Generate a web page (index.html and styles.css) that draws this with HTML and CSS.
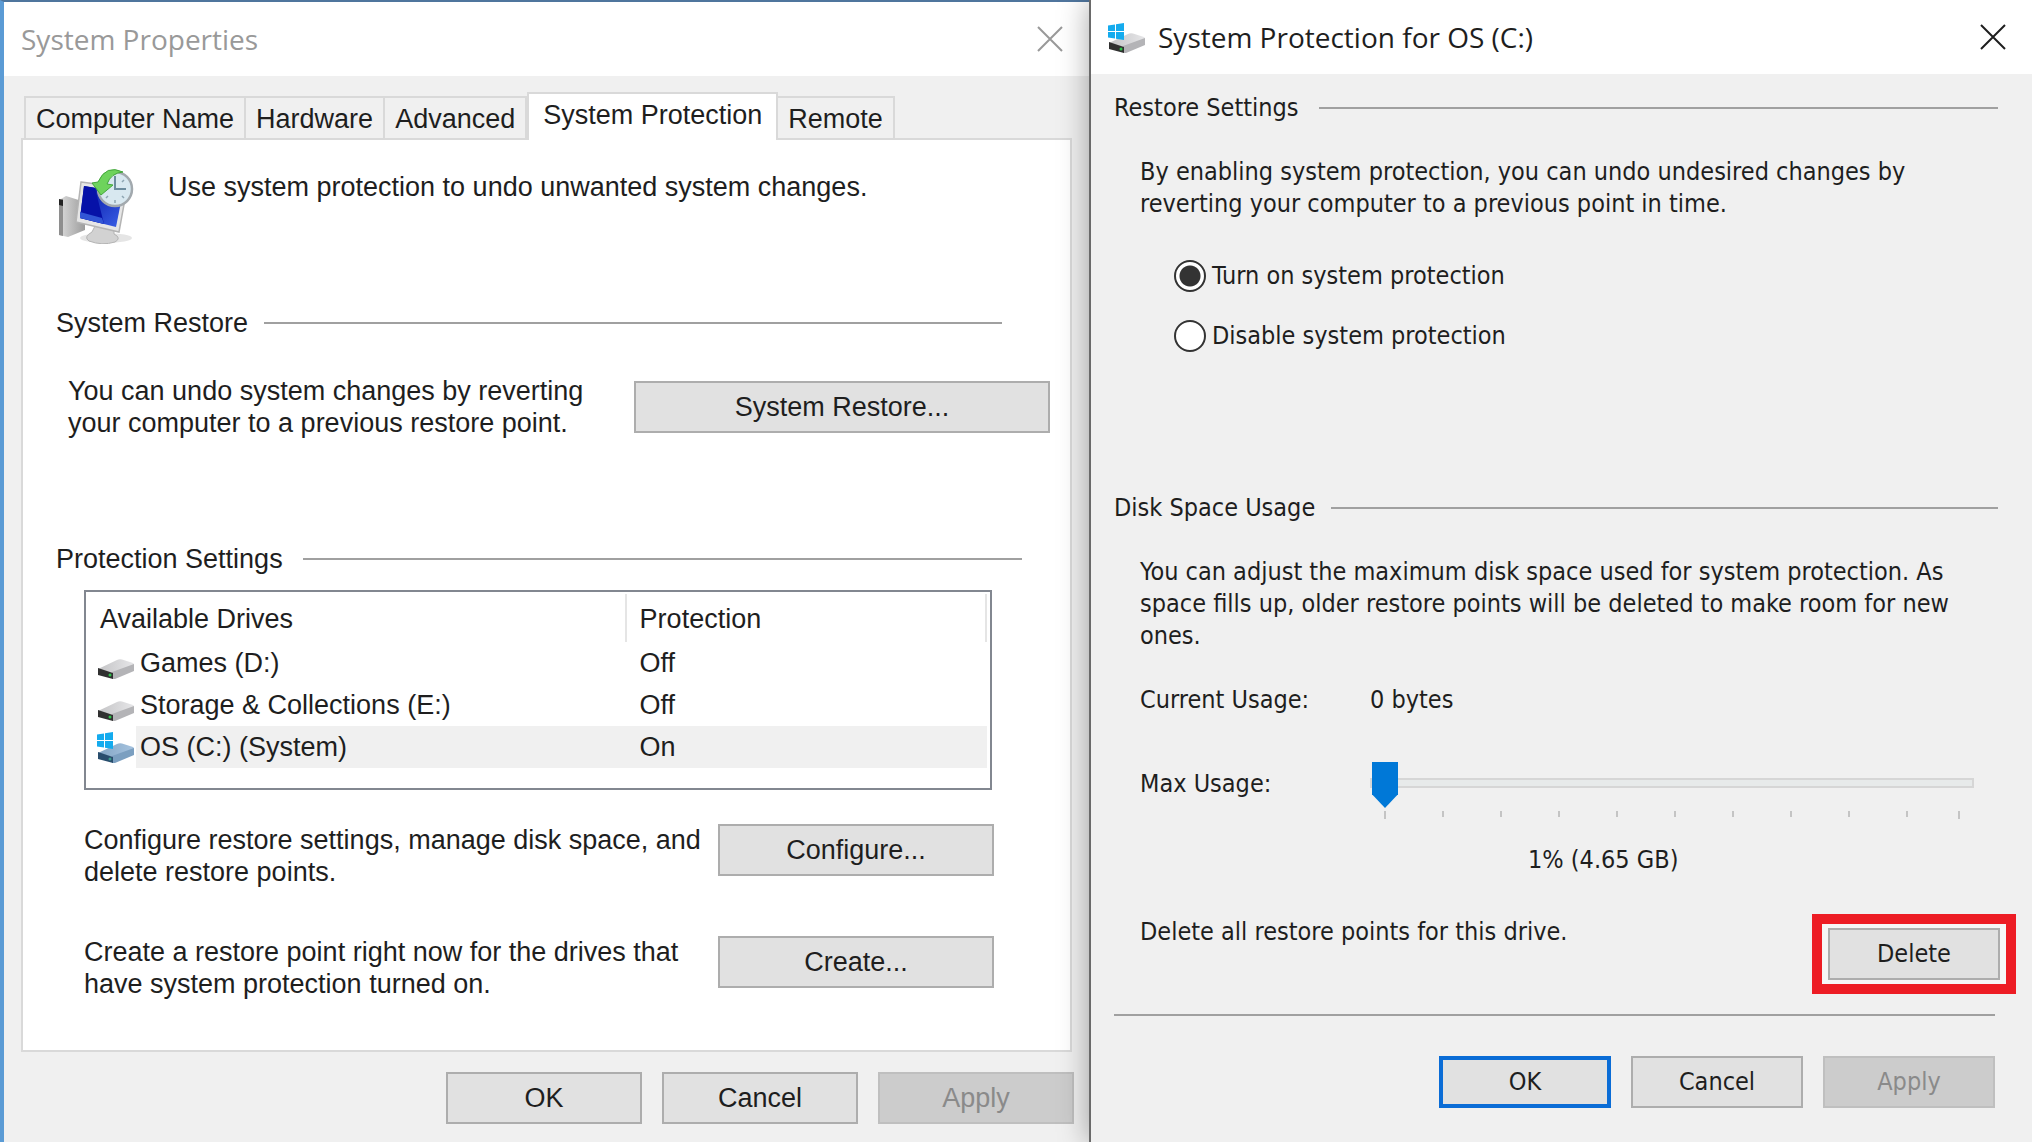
FILE: index.html
```html
<!DOCTYPE html>
<html lang="en">
<head>
    <meta charset="UTF-8">
    <meta name="viewport" content="width=device-width, initial-scale=1.0">
    <title>System Protection</title>
    <link rel="stylesheet" href="styles.css">
</head>
<body>
    <svg class="defs" width="0" height="0" aria-hidden="true">
        <defs>
            <linearGradient id="drive-top" x1="0" x2="1">
                <stop offset="0" stop-color="#c4c4c6"/>
                <stop offset="1" stop-color="#e6e6e8"/>
            </linearGradient>
            <linearGradient id="drive-top-blue" x1="0" x2="1">
                <stop offset="0" stop-color="#83a5c4"/>
                <stop offset="1" stop-color="#a6c3df"/>
            </linearGradient>
            <linearGradient id="metal" x1="0" x2="1">
                <stop offset="0" stop-color="#dcdcdc"/>
                <stop offset="1" stop-color="#9c9c9c"/>
            </linearGradient>
            <linearGradient id="screen" x1="0" x2="1" y1="0" y2="1">
                <stop offset="0" stop-color="#0010a0"/>
                <stop offset="1" stop-color="#3c62e8"/>
            </linearGradient>
            <symbol id="drive" viewBox="0 0 38 36">
                <path d="M1 24 L20 15 Q22 14 25 14.500 L36 18 Q37 18.500 37 20 L15 28 Z" fill="url(#drive-top)"/>
                <path d="M37 19 V26 L18 34 L15 34 V27 Z" fill="#b4b4b7"/>
                <path d="M1 23 L16 28 V34 L1 30 Z" fill="#303030"/>
                <circle cx="13" cy="30" r="1.500" fill="#2fc24a"/>
            </symbol>
            <symbol id="drive-blue" viewBox="0 0 38 36">
                <path d="M1 24 L20 15 Q22 14 25 14.500 L36 18 Q37 18.500 37 20 L15 28 Z" fill="url(#drive-top-blue)"/>
                <path d="M37 19 V26 L18 34 L15 34 V27 Z" fill="#7b9fc0"/>
                <path d="M1 23 L16 28 V34 L1 30 Z" fill="#294d6d"/>
                <circle cx="13" cy="30" r="1.500" fill="#3c9c8c"/>
            </symbol>
            <symbol id="win-flag" viewBox="0 0 16 17">
                <path d="M0 2.500 L7 1.500 V8 H0 Z M8 1.300 L16 0 V8 H8 Z M0 9 H7 V15.500 L0 14.500 Z M8 9 H16 V17 L8 15.700 Z"/>
            </symbol>
        </defs>
    </svg>

    <div class="desktop">
        <section class="window window-back">
            <header class="titlebar">
                <h1>System Properties</h1>
                <button class="close" aria-label="Close">
                    <svg width="26" height="26" viewBox="0 0 26 26"><path d="M1 1 L25 25 M25 1 L1 25"/></svg>
                </button>
            </header>

            <div class="body">
                <nav class="tabs" role="tablist">
                    <button role="tab">Computer Name</button>
                    <button role="tab">Hardware</button>
                    <button role="tab">Advanced</button>
                    <button role="tab" class="active" aria-selected="true">System Protection</button>
                    <button role="tab">Remote</button>
                </nav>

                <div class="panel">
                    <div class="intro">
                        <svg width="76" height="76" viewBox="0 0 76 76" aria-hidden="true">
                            <ellipse cx="48" cy="70" rx="26" ry="5" fill="#000" opacity=".1"/>
                            <path d="M1 32 L8 28 L27 34 V62 L10 69 L1 67 Z" fill="url(#metal)"/>
                            <path d="M1 32 L5 31 V68 L1 67 Z" fill="#8e8e8e"/>
                            <path d="M1 31 L5 32 V38 L1 37 Z" fill="#222"/>
                            <path d="M38 56 L56 62 L56 66 Q64 70 57 74 Q44 78 31 73 Q25 69 34 64 Z" fill="#d2d2d2" stroke="#b4b4b4"/>
                            <path d="M23 14 L69 20 L61 64 L18 54 Z" fill="#e6e6e6" stroke="#b4b4b4" stroke-width="1.500"/>
                            <path d="M26 18 L65 24 L58 59 L22 50 Z" fill="url(#screen)"/>
                            <path d="M26 18 L37 20 L46 56 L22 50 Z" fill="#0611a8"/>
                            <path d="M22 44 L44 50 L46 56 L22 50 Z" fill="#3155d6"/>
                            <circle cx="57" cy="21" r="17" fill="#d8e8f0" stroke="#a2a9ae" stroke-width="2.500"/>
                            <path d="M57 8 V21 H68" fill="none" stroke="#6d8c9e" stroke-width="2"/>
                            <path d="M57 32 V35 M44 21 H47 M48 12 L50 14 M66 12 L64 14 M48 30 L50 28 M66 30 L64 28" stroke="#8da5b2" stroke-width="1.500"/>
                            <path d="M65 4 Q48 -4 40 14 L34 15 L43 27 L55 17 L49 16 Q53 5 65 4 Z" fill="#6ed35c" stroke="#43a63c"/>
                        </svg>
                        <p>Use system protection to undo unwanted system changes.</p>
                    </div>

                    <h2 class="rule rule-restore">System Restore</h2>
                    <div class="row row-restore">
                        <p>You can undo system changes by reverting<br>your computer to a previous restore point.</p>
                        <button class="btn btn-wide">System Restore...</button>
                    </div>

                    <h2 class="rule rule-settings">Protection Settings</h2>
                    <div class="drives">
                        <table>
                            <colgroup>
                                <col class="col-icon">
                                <col>
                                <col class="col-state">
                            </colgroup>
                            <thead>
                                <tr>
                                    <th colspan="2" scope="col">Available Drives</th>
                                    <th scope="col" class="state">Protection</th>
                                </tr>
                            </thead>
                            <tbody>
                                <tr>
                                    <td class="icon"><svg width="38" height="36"><use href="#drive"/></svg></td>
                                    <td>Games (D:)</td>
                                    <td class="state">Off</td>
                                </tr>
                                <tr>
                                    <td class="icon"><svg width="38" height="36"><use href="#drive"/></svg></td>
                                    <td>Storage &amp; Collections (E:)</td>
                                    <td class="state">Off</td>
                                </tr>
                                <tr class="selected">
                                    <td class="icon">
                                        <svg width="38" height="36"><use href="#drive-blue"/><use class="flag" href="#win-flag" y="3" width="16" height="17"/></svg>
                                    </td>
                                    <td>OS (C:) (System)</td>
                                    <td class="state">On</td>
                                </tr>
                            </tbody>
                        </table>
                    </div>

                    <div class="row row-configure">
                        <p>Configure restore settings, manage disk space, and<br>delete restore points.</p>
                        <button class="btn btn-mid">Configure...</button>
                    </div>
                    <div class="row row-create">
                        <p>Create a restore point right now for the drives that<br>have system protection turned on.</p>
                        <button class="btn btn-mid">Create...</button>
                    </div>
                </div>

                <footer class="actions">
                    <button class="btn">OK</button>
                    <button class="btn">Cancel</button>
                    <button class="btn" disabled>Apply</button>
                </footer>
            </div>
        </section>

        <section class="window window-front">
            <header class="titlebar">
                <svg width="38" height="36" aria-hidden="true"><use href="#drive"/><use class="flag" href="#win-flag" y="4" width="16" height="17"/></svg>
                <h1>System Protection for OS (C:)</h1>
                <button class="close" aria-label="Close">
                    <svg width="26" height="26" viewBox="0 0 26 26"><path d="M1 1 L25 25 M25 1 L1 25"/></svg>
                </button>
            </header>

            <form class="body">
                <h2 class="rule">Restore Settings</h2>
                <p class="text">By enabling system protection, you can undo undesired changes by<br>reverting your computer to a previous point in time.</p>
                <div class="radios">
                    <label><input type="radio" name="protection" checked>Turn on system protection</label>
                    <label><input type="radio" name="protection">Disable system protection</label>
                </div>

                <h2 class="rule rule-usage">Disk Space Usage</h2>
                <p class="text">You can adjust the maximum disk space used for system protection. As<br>space fills up, older restore points will be deleted to make room for new<br>ones.</p>
                <div class="usage">
                    <span>Current Usage:</span>
                    <span>0 bytes</span>
                </div>
                <div class="usage usage-max">
                    <label for="max-usage">Max Usage:</label>
                    <div class="slider">
                        <input type="range" id="max-usage" min="1" max="100" value="1">
                        <div class="ticks">
                            <i></i><i></i><i></i><i></i><i></i><i></i><i></i><i></i><i></i><i></i>
                        </div>
                        <output for="max-usage">1% (4.65 GB)</output>
                    </div>
                </div>

                <div class="delete">
                    <p>Delete all restore points for this drive.</p>
                    <div class="highlight">
                        <button type="button" class="btn">Delete</button>
                    </div>
                </div>

                <footer class="actions">
                    <button type="button" class="btn btn-default">OK</button>
                    <button type="button" class="btn">Cancel</button>
                    <button type="button" class="btn" disabled>Apply</button>
                </footer>
            </form>
        </section>
    </div>
</body>
</html>
```

FILE: styles.css
```css
* {
    box-sizing: border-box;
}

body {
    margin: 0;
    color: #1e1e1e;
    background-color: #f0f0f0;
}

h1, h2, p {
    margin: 0;
    font-weight: normal;
}

button {
    font: inherit;
    color: inherit;
}

svg {
    display: block;
    flex: none;
}

.defs {
    position: absolute;
}

.flag {
    fill: #14abee;
}

.desktop {
    display: grid;
    grid-template-columns: 1089fr 943fr;
    min-height: 100vh;
}

.window {
    display: flex;
    flex-direction: column;
    background-color: #f0f0f0;
    line-height: 32px;
}

.window-back {
    border-top: 2px solid #4f759d;
    border-left: 4px solid #5b9bd5;
    font-family: "Liberation Sans", Arial, sans-serif;
    font-size: 27px;
}

.window-front {
    position: relative;
    border-left: 2px solid #6a6a6a;
    box-shadow: 0 0 28px rgba(0, 0, 0, .35);
    font-family: "DejaVu Sans Condensed", "DejaVu Sans", Tahoma, sans-serif;
    font-size: 25px;
}

.titlebar {
    display: flex;
    align-items: center;
    height: 74px;
    padding: 0 26px 0 17px;
    background-color: #fff;
}

.titlebar h1 {
    flex: 1;
    font-family: "Open Sans", "Segoe UI", sans-serif;
    font-size: 28px;
}

.window-back .titlebar {
    color: #999;
}

.window-front .titlebar h1 {
    margin-left: 12px;
}

.close {
    padding: 0;
    border: none;
    background: none;
}

.close path {
    stroke: currentColor;
    stroke-width: 2;
}

.body {
    display: flex;
    flex: 1;
    flex-direction: column;
}

.window-back .body {
    padding: 16px 15px 18px 17px;
}

.window-front .body {
    padding: 18px 34px 32px 23px;
}

/* tabs */
.tabs {
    display: flex;
    align-items: flex-end;
    padding-left: 3px;
}

.tabs button {
    height: 42px;
    padding: 2px 10px 0;
    border: 2px solid #d9d9d9;
    border-bottom: none;
    background-color: #f0f0f0;
    white-space: nowrap;
}

.tabs button + button {
    border-left: none;
}

.tabs button.active {
    z-index: 1;
    height: 48px;
    margin-bottom: -2px;
    padding: 0 14px 4px;
    border-left: 2px solid #d9d9d9;
    background-color: #fff;
}

.panel {
    flex: 1;
    margin-right: 2px;
    padding: 28px 20px 0 33px;
    border: 2px solid #d9d9d9;
    background-color: #fff;
}

.intro {
    display: flex;
    gap: 34px;
    padding-left: 2px;
}

.intro p {
    padding-top: 3px;
}

/* heading followed by a line */
.rule {
    display: flex;
    align-items: center;
    gap: 20px;
    font-size: inherit;
}

.rule::after {
    content: '';
    flex: 1;
    height: 2px;
    background-color: #a0a0a0;
}

.rule-restore {
    gap: 16px;
    margin: 63px 48px 0 0;
}

.rule-settings {
    gap: 20px;
    margin: 104px 28px 0 0;
}

.row {
    display: flex;
    justify-content: space-between;
    align-items: flex-start;
}

.row p {
    white-space: nowrap;
}

.row-restore {
    align-items: center;
    margin-top: 36px;
    padding-left: 12px;
}

.row-configure {
    margin-top: 34px;
    padding: 0 56px 0 28px;
}

.row-create {
    margin-top: 48px;
    padding: 0 56px 0 28px;
}

.btn {
    width: 196px;
    height: 52px;
    padding: 0;
    border: 2px solid #adadad;
    background-color: #e1e1e1;
}

.btn-wide {
    width: 416px;
}

.btn-mid {
    width: 276px;
}

.btn:disabled {
    border-color: #bfbfbf;
    background-color: #ccc;
    color: #8a8a8a;
}

.btn-default {
    border: 4px solid #0a6cd6;
}

.drives {
    min-height: 200px;
    margin: 15px 58px 0 28px;
    padding: 2px 3px 0 0;
    border: 2px solid #828790;
}

.drives table {
    width: 100%;
    border-spacing: 0;
    table-layout: fixed;
}

.col-icon {
    width: 50px;
}

.col-state {
    width: 40%;
}

.drives th {
    height: 48px;
    padding: 2px 0 0 14px;
    border-right: 2px solid #e5e5e5;
    font-weight: normal;
    text-align: left;
}

.drives td {
    height: 42px;
    padding: 0 0 0 4px;
}

.drives .state {
    padding-left: 13px;
}

.drives td.icon {
    padding: 0 0 0 11px;
}

.drives .selected td:not(.icon) {
    background-color: #f0f0f0;
}

.actions {
    display: flex;
    justify-content: flex-end;
    gap: 20px;
    padding-top: 20px;
}

/* front window */
.text {
    margin-top: 32px;
    padding-left: 26px;
    white-space: nowrap;
}

.radios {
    display: flex;
    flex-direction: column;
    gap: 28px;
    margin-top: 40px;
    padding-left: 60px;
}

.radios label {
    display: flex;
    align-items: center;
    gap: 6px;
}

.radios input {
    appearance: none;
    width: 32px;
    height: 32px;
    margin: 0;
    border: 2px solid #333;
    border-radius: 50%;
    background-color: #fff;
}

.radios input:checked {
    background-image: radial-gradient(circle, #333 10px, #fff 11px);
}

.rule-usage {
    gap: 16px;
    margin-top: 140px;
}

.usage {
    display: grid;
    grid-template-columns: 230px 1fr;
    margin-top: 32px;
    padding: 0 24px 0 26px;
}

.usage-max {
    margin-top: 44px;
}

.usage-max label {
    padding-top: 8px;
}

.slider {
    display: flex;
    flex-direction: column;
}

.slider input {
    appearance: none;
    width: 100%;
    height: 46px;
    margin: 0;
    background: none;
}

.slider input::-webkit-slider-runnable-track {
    height: 10px;
    border: 2px solid #d6d6d6;
    background-color: #e7eaea;
}

.slider input::-webkit-slider-thumb {
    appearance: none;
    width: 26px;
    height: 46px;
    margin-top: -18px;
    background-color: #0078d7;
    clip-path: polygon(0 0, 100% 0, 100% 70%, 50% 100%, 0 70%);
}

.ticks {
    display: flex;
    height: 8px;
    margin: 5px 14px 0;
    border-left: 2px solid #c4c4c4;
}

/* steps of ten from 1, so the last one is short */
.ticks i {
    flex: 10;
    height: 6px;
    border-right: 2px solid #c4c4c4;
}

.ticks i:last-child {
    flex: 9;
    height: 8px;
}

.slider output {
    margin: 25px 0 0 158px;
}

.delete {
    display: flex;
    justify-content: space-between;
    align-items: flex-start;
    margin: 38px -18px 0 0;
    padding-left: 26px;
}

.delete p {
    padding-top: 2px;
    white-space: nowrap;
}

.highlight {
    padding: 4px 6px;
    border: 10px solid #ed1c24;
    background-color: #f6f6f6;
}

.window-front .btn {
    width: 172px;
}

.window-front .actions {
    gap: 20px;
    margin: 20px 3px 0 0;
    padding-top: 40px;
    border-top: 2px solid #a0a0a0;
}
```
